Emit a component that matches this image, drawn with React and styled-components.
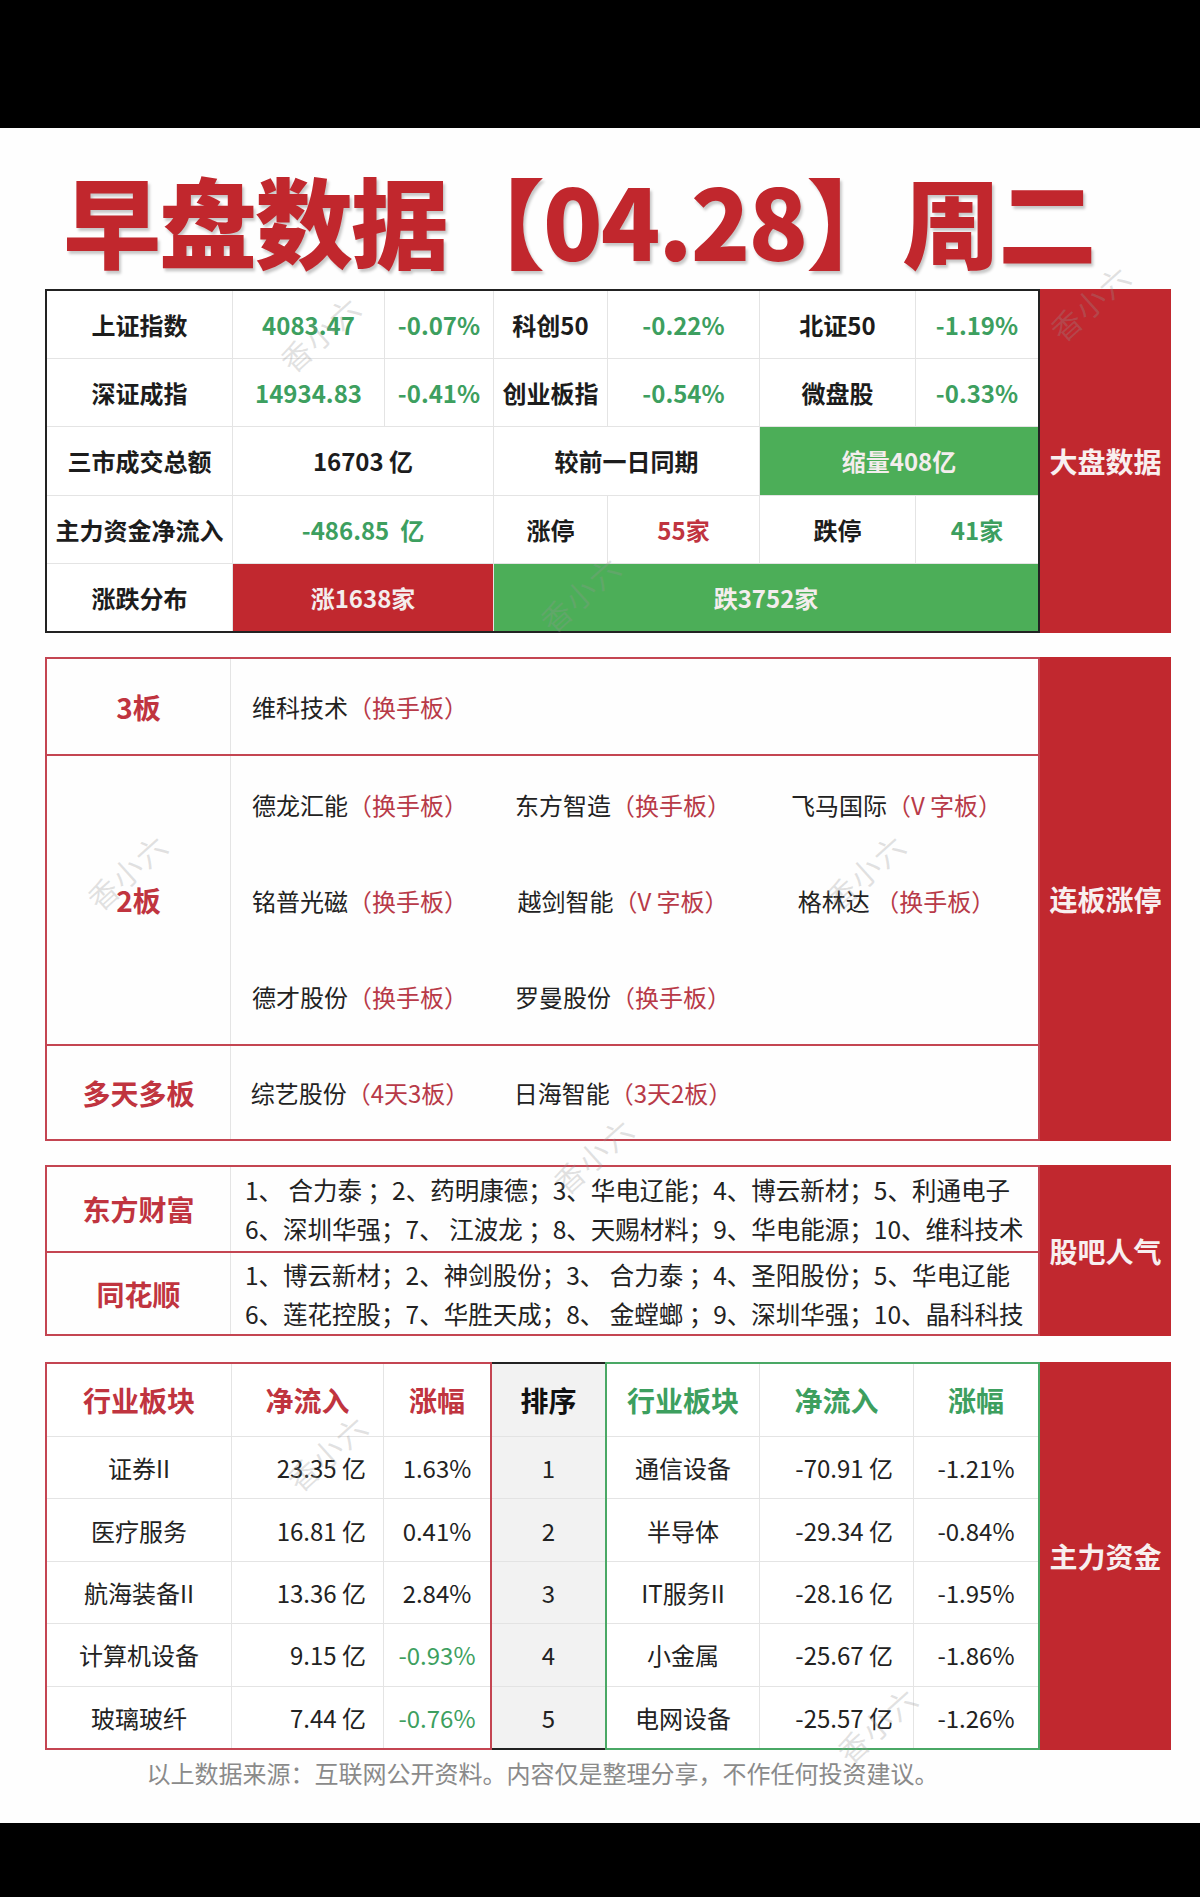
import React from 'react';
import styled, { createGlobalStyle } from 'styled-components';

const RED = '#c1282f';
const BORDER_RED = '#c44552';
const GREEN_BG = '#4cae58';
const GREEN_TXT = '#3d9f5f';
const GREEN_BORDER = '#4aa865';
const RED_TXT = '#c0343f';
const TAG_RED = '#b83a48';
const LINE = '#e4e4e4';
const INK = '#1c1c1c';

const GlobalStyle = createGlobalStyle`
  html, body { margin: 0; padding: 0; background: #000; }
  body { font-family: "Noto Sans CJK SC", "Noto Sans", sans-serif; }
  * { box-sizing: border-box; }
`;

const Page = styled.div`
  width: 1200px;
  height: 1897px;
  background: #000;
  display: flex;
  flex-direction: column;
`;

const BlackBand = styled.div`
  flex: none;
  height: ${p => p.$h}px;
  background: #000;
`;

const Sheet = styled.main`
  position: relative;
  flex: none;
  height: 1695px;
  background: #fefefe;
  padding: 40px 29px 0 45px;
  display: flex;
  flex-direction: column;
  overflow: hidden;
`;

const Title = styled.h1`
  margin: 0 0 21px 18px;
  font-size: 98px;
  line-height: 100px;
  font-weight: 900;
  letter-spacing: -2px;
  color: #c1272d;
  white-space: nowrap;
  text-shadow: 2px 3px 3px rgba(0, 0, 0, 0.22);
`;

const Section = styled.section`
  display: flex;
  flex: none;
  height: ${p => p.$h}px;
  margin-top: ${p => p.$gap || 0}px;
`;

const SideLabel = styled.div`
  width: 131px;
  flex: none;
  background: ${RED};
  color: #f8efef;
  font-size: 28px;
  font-weight: 700;
  display: flex;
  align-items: center;
  justify-content: center;
`;

/* ---------- 大盘数据 ---------- */
const MarketGrid = styled.div`
  width: 995px;
  flex: none;
  border: 2px solid #222;
  display: grid;
  grid-template-columns: 185px 151px 108px 113px 151px 155px 1fr;
  grid-template-rows: repeat(5, 1fr);
  gap: 1px;
  background: ${LINE};
`;

const toneColor = {
  label: INK,
  green: GREEN_TXT,
  red: RED_TXT,
  onColor: '#f4eded',
};

const MCell = styled.div`
  grid-column: span ${p => p.$span || 1};
  background: ${p => (p.$bg === 'red' ? RED : p.$bg === 'green' ? GREEN_BG : '#fff')};
  color: ${p => toneColor[p.$tone || 'label']};
  display: flex;
  align-items: center;
  justify-content: center;
  font-size: 24px;
  font-weight: 700;
  white-space: pre;
`;

/* ---------- 连板涨停 / 股吧人气 ---------- */
const FramedTable = styled.div`
  width: 995px;
  flex: none;
  border: 2px solid ${BORDER_RED};
  display: flex;
  flex-direction: column;
`;

const FramedRow = styled.div`
  display: grid;
  grid-template-columns: 184px 1fr;
  height: ${p => p.$h}px;
  flex: none;
  border-bottom: ${p => (p.$last ? 'none' : `2px solid ${BORDER_RED}`)};
`;

const RowLabel = styled.div`
  display: flex;
  align-items: center;
  justify-content: center;
  font-size: 28px;
  font-weight: 700;
  color: ${RED_TXT};
  border-right: 1px solid ${LINE};
`;

const StockGrid = styled.div`
  display: grid;
  grid-template-columns: 260px 266px 1fr;
  grid-auto-rows: 1fr;
`;

const Stock = styled.div`
  display: flex;
  align-items: center;
  justify-content: center;
  padding-right: 2px;
  font-size: 24px;
  color: #222;
  white-space: pre;
`;

const Tag = styled.span`
  color: ${TAG_RED};
`;

const HotList = styled.div`
  display: flex;
  flex-direction: column;
  justify-content: center;
  padding-left: 14px;
  font-size: 24.5px;
  line-height: 39px;
  color: #222;
  white-space: pre;
`;

/* ---------- 主力资金 ---------- */
const FundTables = styled.div`
  width: 995px;
  flex: none;
  display: flex;
`;

const FundTable = styled.div`
  width: ${p => p.$w}px;
  flex: none;
  border: 2px solid ${p => p.$border};
  display: grid;
  grid-template-columns: ${p => p.$cols};
  grid-template-rows: 72px repeat(5, 1fr);
  gap: 1px;
  background: ${LINE};
`;

const RankCol = styled.div`
  width: 113px;
  flex: none;
  border-top: 2px solid #222;
  border-bottom: 2px solid #222;
  display: grid;
  grid-template-rows: 72px repeat(5, 1fr);
  gap: 1px;
  background: #e3e3e3;
`;

const FCell = styled.div`
  background: ${p => p.$bg || '#fff'};
  display: flex;
  align-items: center;
  justify-content: ${p => (p.$pad ? 'flex-end' : 'center')};
  padding-right: ${p => p.$pad || 0}px;
  font-size: 24px;
  color: ${p => p.$color || '#222'};
  white-space: pre;
`;

const FHead = styled(FCell)`
  font-size: 28px;
  font-weight: 700;
`;

const Footer = styled.p`
  width: 995px;
  margin: 7px 0 0;
  text-align: center;
  font-size: 24px;
  line-height: 32px;
  color: #8a8a8a;
  white-space: nowrap;
`;

const Watermark = styled.span`
  position: absolute;
  left: ${p => p.$x}px;
  top: ${p => p.$y}px;
  transform: translate(-50%, -50%) rotate(-42deg);
  font-size: 30px;
  color: rgba(150, 150, 150, 0.28);
  pointer-events: none;
  white-space: nowrap;
  letter-spacing: 2px;
`;

/* ---------- data ---------- */
const boards2 = [
  ['德龙汇能', '（换手板）'],
  ['东方智造', '（换手板）'],
  ['飞马国际', '（V 字板）'],
  ['铭普光磁', '（换手板）'],
  ['越剑智能', '（V 字板）'],
  ['格林达 ', '（换手板）'],
  ['德才股份', '（换手板）'],
  ['罗曼股份', '（换手板）'],
];

const inflow = [
  ['证券II', '23.35 亿', '1.63%', false],
  ['医疗服务', '16.81 亿', '0.41%', false],
  ['航海装备II', '13.36 亿', '2.84%', false],
  ['计算机设备', '9.15 亿', '-0.93%', true],
  ['玻璃玻纤', '7.44 亿', '-0.76%', true],
];

const outflow = [
  ['通信设备', '-70.91 亿', '-1.21%'],
  ['半导体', '-29.34 亿', '-0.84%'],
  ['IT服务II', '-28.16 亿', '-1.95%'],
  ['小金属', '-25.67 亿', '-1.86%'],
  ['电网设备', '-25.57 亿', '-1.26%'],
];

const marks = [
  [320, 205], [1090, 174], [580, 465], [127, 743], [865, 743],
  [593, 1027], [327, 1324], [877, 1596],
];

export default function App() {
  return (
    <Page>
      <GlobalStyle />
      <BlackBand $h={128} />
      <Sheet>
        <Title>早盘数据【04.28】周二</Title>

        <Section $h={344}>
          <MarketGrid>
            <MCell>上证指数</MCell>
            <MCell $tone="green">4083.47</MCell>
            <MCell $tone="green">-0.07%</MCell>
            <MCell>科创50</MCell>
            <MCell $tone="green">-0.22%</MCell>
            <MCell>北证50</MCell>
            <MCell $tone="green">-1.19%</MCell>

            <MCell>深证成指</MCell>
            <MCell $tone="green">14934.83</MCell>
            <MCell $tone="green">-0.41%</MCell>
            <MCell>创业板指</MCell>
            <MCell $tone="green">-0.54%</MCell>
            <MCell>微盘股</MCell>
            <MCell $tone="green">-0.33%</MCell>

            <MCell>三市成交总额</MCell>
            <MCell $span={2}>16703 亿</MCell>
            <MCell $span={2}>较前一日同期</MCell>
            <MCell $span={2} $bg="green" $tone="onColor">缩量408亿</MCell>

            <MCell>主力资金净流入</MCell>
            <MCell $span={2} $tone="green">{'-486.85\u00a0\u00a0亿'}</MCell>
            <MCell>涨停</MCell>
            <MCell $tone="red">55家</MCell>
            <MCell>跌停</MCell>
            <MCell $tone="green">41家</MCell>

            <MCell>涨跌分布</MCell>
            <MCell $span={2} $bg="red" $tone="onColor">涨1638家</MCell>
            <MCell $span={4} $bg="green" $tone="onColor">跌3752家</MCell>
          </MarketGrid>
          <SideLabel>大盘数据</SideLabel>
        </Section>

        <Section $h={484} $gap={24}>
          <FramedTable>
            <FramedRow $h={97}>
              <RowLabel>3板</RowLabel>
              <StockGrid>
                <Stock>维科技术<Tag>（换手板）</Tag></Stock>
              </StockGrid>
            </FramedRow>
            <FramedRow $h={290}>
              <RowLabel>2板</RowLabel>
              <StockGrid>
                {boards2.map(([name, tag]) => (
                  <Stock key={name}>{name}<Tag>{tag}</Tag></Stock>
                ))}
              </StockGrid>
            </FramedRow>
            <FramedRow $h={93} $last>
              <RowLabel>多天多板</RowLabel>
              <StockGrid>
                <Stock>综艺股份<Tag>（4天3板）</Tag></Stock>
                <Stock>日海智能<Tag>（3天2板）</Tag></Stock>
              </StockGrid>
            </FramedRow>
          </FramedTable>
          <SideLabel>连板涨停</SideLabel>
        </Section>

        <Section $h={171} $gap={24}>
          <FramedTable>
            <FramedRow $h={86}>
              <RowLabel>东方财富</RowLabel>
              <HotList>
                <span>1、 合力泰 ；2、药明康德；3、华电辽能；4、博云新材；5、利通电子</span>
                <span>6、深圳华强；7、 江波龙 ；8、天赐材料；9、华电能源；10、维科技术</span>
              </HotList>
            </FramedRow>
            <FramedRow $h={81} $last>
              <RowLabel>同花顺</RowLabel>
              <HotList>
                <span>1、博云新材；2、神剑股份；3、 合力泰 ；4、圣阳股份；5、华电辽能</span>
                <span>6、莲花控股；7、华胜天成；8、 金螳螂 ；9、深圳华强；10、晶科科技</span>
              </HotList>
            </FramedRow>
          </FramedTable>
          <SideLabel>股吧人气</SideLabel>
        </Section>

        <Section $h={388} $gap={26}>
          <FundTables>
            <FundTable $w={447} $border={BORDER_RED} $cols="184px 151px 1fr">
              <FHead $color={RED_TXT}>行业板块</FHead>
              <FHead $color={RED_TXT}>净流入</FHead>
              <FHead $color={RED_TXT}>涨幅</FHead>
              {inflow.map(([name, amt, pct, down]) => (
                <React.Fragment key={name}>
                  <FCell>{name}</FCell>
                  <FCell $pad={17}>{amt}</FCell>
                  <FCell $color={down ? GREEN_TXT : '#222'}>{pct}</FCell>
                </React.Fragment>
              ))}
            </FundTable>
            <RankCol>
              <FHead $bg="#f2f2f2" $color="#111">排序</FHead>
              {[1, 2, 3, 4, 5].map(n => (
                <FCell key={n} $bg="#f2f2f2">{n}</FCell>
              ))}
            </RankCol>
            <FundTable $w={435} $border={GREEN_BORDER} $cols="152px 153px 1fr">
              <FHead $color={GREEN_TXT}>行业板块</FHead>
              <FHead $color={GREEN_TXT}>净流入</FHead>
              <FHead $color={GREEN_TXT}>涨幅</FHead>
              {outflow.map(([name, amt, pct]) => (
                <React.Fragment key={name}>
                  <FCell>{name}</FCell>
                  <FCell $pad={20}>{amt}</FCell>
                  <FCell>{pct}</FCell>
                </React.Fragment>
              ))}
            </FundTable>
          </FundTables>
          <SideLabel>主力资金</SideLabel>
        </Section>

        <Footer>以上数据来源：互联网公开资料。内容仅是整理分享，不作任何投资建议。</Footer>

        {marks.map(([x, y]) => (
          <Watermark key={`${x}-${y}`} $x={x} $y={y}>香小六</Watermark>
        ))}
      </Sheet>
      <BlackBand $h={74} />
    </Page>
  );
}
